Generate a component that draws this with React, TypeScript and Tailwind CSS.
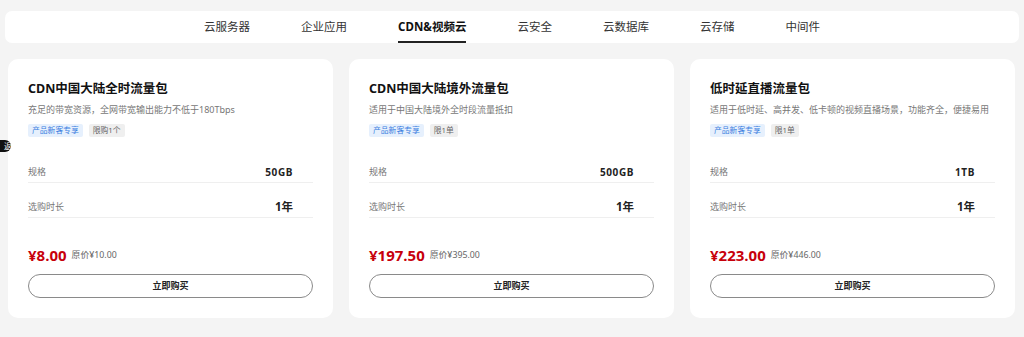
import React from "react";

const navItems = ["云服务器", "企业应用", "CDN&视频云", "云安全", "云数据库", "云存储", "中间件"];

type Card = {
  title: string;
  desc: string;
  limit: string;
  spec: string;
  price: string;
  orig: string;
};

const cards: Card[] = [
  {
    title: "CDN中国大陆全时流量包",
    desc: "充足的带宽资源，全网带宽输出能力不低于180Tbps",
    limit: "限购1个",
    spec: "50GB",
    price: "¥8.00",
    orig: "原价¥10.00",
  },
  {
    title: "CDN中国大陆境外流量包",
    desc: "适用于中国大陆境外全时段流量抵扣",
    limit: "限1单",
    spec: "500GB",
    price: "¥197.50",
    orig: "原价¥395.00",
  },
  {
    title: "低时延直播流量包",
    desc: "适用于低时延、高并发、低卡顿的视频直播场景，功能齐全，便捷易用",
    limit: "限1单",
    spec: "1TB",
    price: "¥223.00",
    orig: "原价¥446.00",
  },
];

const font = { fontFamily: '"Noto Sans", "Noto Sans CJK SC", sans-serif' };

export default function App() {
  return (
    <div
      className="relative w-[1024px] h-[337px] bg-[#f4f4f4] overflow-hidden"
      style={font}
    >
      <div className="pt-[11px] px-[5px]">
        <div className="h-[32px] bg-white rounded-[7px] flex justify-center gap-[51px]">
          {navItems.map((n, i) => (
            <div
              key={n}
              className={
                "relative h-full flex items-center text-[11.5px] " +
                (i === 2 ? "font-bold text-[#111]" : "text-[#333]")
              }
            >
              {n}
              {i === 2 && (
                <div className="absolute left-0 right-0 bottom-0 h-[2px] bg-[#222]" />
              )}
            </div>
          ))}
        </div>
      </div>

      <div className="flex gap-[16px] pl-[8px] mt-[16px]">
        {cards.map((c) => (
          <div
            key={c.title}
            className="w-[325px] h-[259px] bg-white rounded-[10px] pt-[21px] px-[20px] pb-[20px] flex flex-col"
          >
            <div className="text-[12.5px] font-bold leading-[18px] text-[#111]">{c.title}</div>
            <div className="mt-[5px] text-[9px] leading-[14px] text-[#777]">{c.desc}</div>
            <div className="mt-[7px] flex gap-[6px]">
              <span className="h-[13px] px-[4px] flex items-center text-[7.8px] bg-[#e6f0fd] text-[#3a7de0] rounded-[2px]">
                产品新客专享
              </span>
              <span className="h-[13px] px-[4px] flex items-center text-[7.8px] bg-[#efefef] text-[#666] rounded-[2px]">
                {c.limit}
              </span>
            </div>
            <div className="mt-[11px]">
              <div className="flex justify-between items-center pt-[17px] pb-[3px] leading-[14px] border-b border-[#efefef]">
                <span className="text-[9px] text-[#777]">规格</span>
                <span className="pr-[20px] text-[10px] font-bold text-[#222] tracking-[0.6px]">{c.spec}</span>
              </div>
              <div className="flex justify-between items-center pt-[17px] pb-[3px] leading-[14px] border-b border-[#efefef]">
                <span className="text-[9px] text-[#777]">选购时长</span>
                <span className="pr-[20px] text-[11.5px] font-bold text-[#222]">1年</span>
              </div>
            </div>
            <div className="mt-[27px] h-[20px] flex items-center gap-[5px]">
              <span
                className="text-[15px] font-bold text-[#c7000b]"
                style={{ fontFamily: '"Open Sans", "Noto Sans CJK SC", sans-serif' }}
              >
                {c.price}
              </span>
              <span className="text-[8.8px] text-[#666] mt-[2px]">{c.orig}</span>
            </div>
            <button className="mt-[9px] h-[25px] w-full rounded-full border border-[#8a8a8a] bg-white text-[9px] font-bold text-[#222] flex items-center justify-center">
              立即购买
            </button>
          </div>
        ))}
      </div>

      <div className="absolute left-0 top-[140px] w-[11px] h-[12px] bg-[#111] rounded-r-full overflow-hidden flex items-center justify-end">
        <span className="text-[8px] leading-none text-white -mr-[1px]">返</span>
      </div>
    </div>
  );
}
